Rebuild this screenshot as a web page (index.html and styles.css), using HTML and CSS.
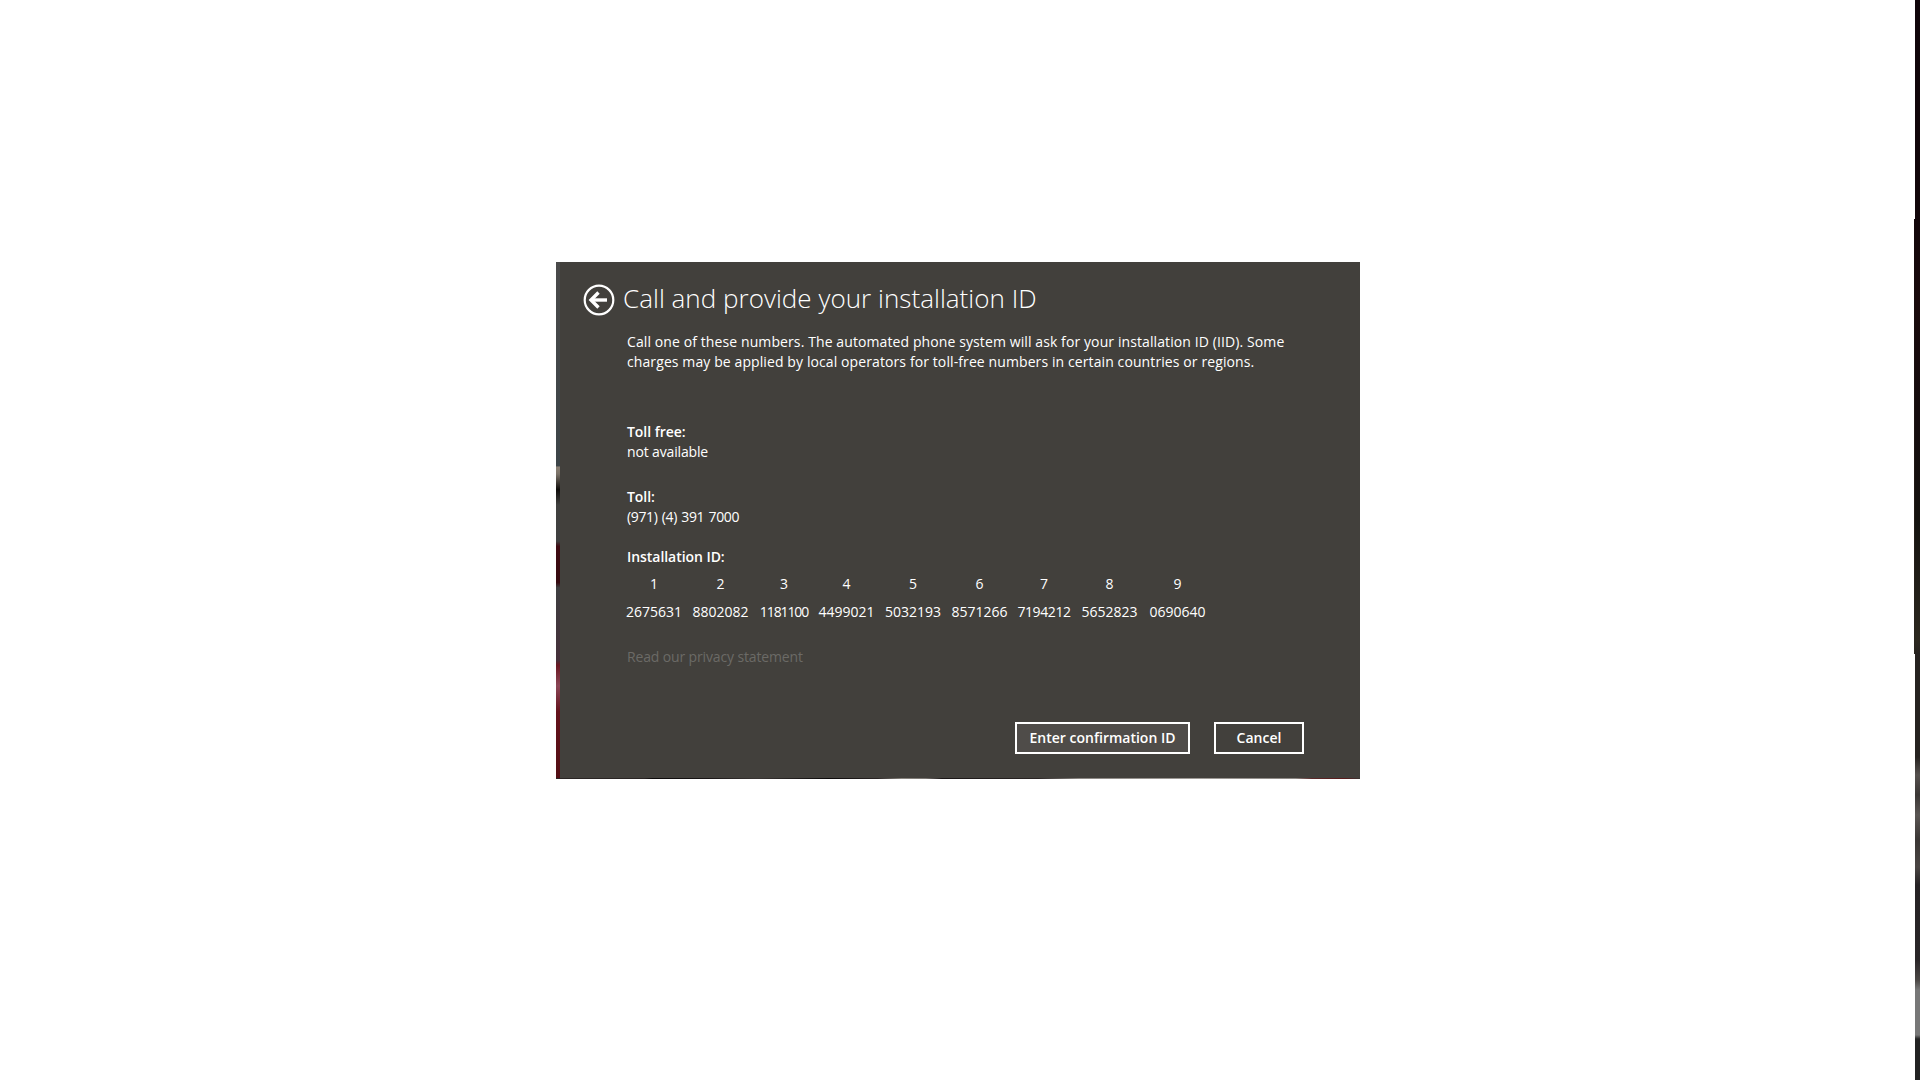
FILE: index.html
```html
<!DOCTYPE html>
<html lang="en">
<head>
<meta charset="utf-8">
<title>Call and provide your installation ID</title>
<link rel="stylesheet" href="styles.css">
</head>
<body>
<div class="edge"></div>
<main class="dialog">
  <header class="head">
    <button class="back" type="button" aria-label="Back">
      <svg width="32" height="32" viewBox="0 0 32 32" fill="none">
        <circle cx="16" cy="16" r="14.3" stroke="#fff" stroke-width="2.2"/>
        <path d="M8 16H24" stroke="#fff" stroke-width="3.4"/>
        <path d="M15.5 8.5L8 16L15.5 23.5" stroke="#fff" stroke-width="3.4"/>
      </svg>
    </button>
    <h1 class="title">Call and provide your installation ID</h1>
  </header>
  <div class="content">
    <p class="intro">Call one of these numbers. The automated phone system will ask for your installation ID (IID). Some<br>charges may be applied by local operators for toll-free numbers in certain countries or regions.</p>
    <section class="block block-free">
      <div class="label">Toll free:</div>
      <div class="value">not available</div>
    </section>
    <section class="block block-toll">
      <div class="label">Toll:</div>
      <div class="value value-phone">(971) (4) 391 7000</div>
    </section>
    <section class="block block-id">
      <div class="label">Installation ID:</div>
      <div class="id-grid">
        <span>1</span><span>2</span><span>3</span><span>4</span><span>5</span><span>6</span><span>7</span><span>8</span><span>9</span>
        <span>2675631</span><span>8802082</span><span class="ones">1181100</span><span>4499021</span><span>5032193</span><span>8571266</span><span class="some-ones">7194212</span><span>5652823</span><span>0690640</span>
      </div>
    </section>
    <a class="privacy" href="#">Read our privacy statement</a>
  </div>
  <footer class="actions">
    <button class="btn btn-primary" type="button">Enter confirmation ID</button>
    <button class="btn btn-cancel" type="button">Cancel</button>
  </footer>
</main>
</body>
</html>
```
FILE: styles.css
```css
* { box-sizing: border-box; }
html, body { height: 100%; }
body {
  margin: 0;
  height: 1080px;
  overflow: hidden;
  background: #fff;
  position: relative;
  font-family: "Open Sans", "Noto Sans", sans-serif;
  padding: 262px 0 0 556px;
}
.edge {
  position: absolute;
  right: 0;
  top: 0;
  bottom: 0;
  width: 6px;
  background:
    linear-gradient(180deg, #10050a 0, #12060a 219px, #1a0a0c 300px, #150c0e 410px, #14120f 520px, #2c281f 640px, #262220 654px, #262220 757px, #55504e 775px, #3a3634 795px, #5a5553 815px, #3a3634 840px, #4a4543 867px, #262224 885px, #2a2628 960px, #4a4644 980px, #777 990px, #777 1035px, #222 1039px, #222 1080px) right top / 5px 100% no-repeat,
    linear-gradient(180deg, transparent 219px, #14080a 219px, #2a261f 654px, transparent 654px) left top / 1px 100% no-repeat;
}
.dialog {
  width: 804px;
  height: 517px;
  color: #fff;
  font-size: 14px;
  line-height: 20px;
  padding: 22px 46px 0 27px;
  background-color: #42403c;
  background-image:
    linear-gradient(90deg, #2a2524 0, #2a2524 11%, #0c0a0a 12%, #1a1616 19%, #3a3634 25%, #0c0a0a 34%, #2a2524 40%, #8a8680 43%, #7a7672 46%, #1a1616 48%, #2a2524 60%, #8c8884 65%, #a09c98 80%, #8c8884 92%, #5a2a2a 94%, #5a1a1a 98%, #3a3634 100%),
    linear-gradient(180deg, #4a4a4a 0, #3c4448 39.5%, #8a8074 39.6%, #7a7268 41%, #0f0c0a 44%, #40403e 47%, #3f3f40 54%, #3f0a12 55%, #350a10 62%, #3e3e40 63%, #45303a 77%, #6a1822 78%, #8a4656 82%, #64121c 87%, #520e14 100%);
  background-size: 100% 1px, 4px 100%;
  background-position: left bottom, left top;
  background-repeat: no-repeat;
}
.head {
  display: flex;
  align-items: center;
  gap: 8px;
  height: 32px;
}
.back {
  display: block;
  width: 32px;
  height: 32px;
  padding: 0;
  border: 0;
  background: none;
}
.title {
  margin: 0;
  padding-bottom: 4px;
  font-size: 26px;
  line-height: 32px;
  font-weight: 300;
  letter-spacing: 0.03px;
  white-space: nowrap;
}
.content { padding: 16px 0 0 44px; }
.intro { margin: 0; letter-spacing: 0.1px; }
.block-free { margin-top: 50px; }
.block-toll { margin-top: 25px; }
.block-id { margin-top: 20px; }
.label { font-weight: 600; letter-spacing: -0.05px; }
.value { letter-spacing: -0.15px; }
.value-phone { letter-spacing: -0.35px; word-spacing: 1px; }
.id-grid {
  display: grid;
  grid-template-columns: 54px 56px 48px 54px 56px 54px 52px 56px 57px;
  column-gap: 11.5px;
  row-gap: 8px;
  margin-top: 7px;
  justify-items: center;
}
.id-grid span { white-space: nowrap; }
.ones { letter-spacing: -1.1px; }
.some-ones { letter-spacing: -0.4px; }
.privacy {
  display: block;
  margin-top: 25px;
  color: #6b6a66;
  letter-spacing: -0.14px;
  text-decoration: none;
}
.actions {
  display: flex;
  justify-content: flex-end;
  gap: 24px;
  margin-top: 55px;
  padding-right: 10px;
}
.btn {
  height: 32px;
  border: 2px solid #fff;
  color: #fff;
  font: 600 14px/28px "Open Sans", "Noto Sans", sans-serif;
  padding: 0;
}
.btn-primary { width: 175px; background: #4f4c49; }
.btn-cancel { width: 90px; background: #42403c; }
```
